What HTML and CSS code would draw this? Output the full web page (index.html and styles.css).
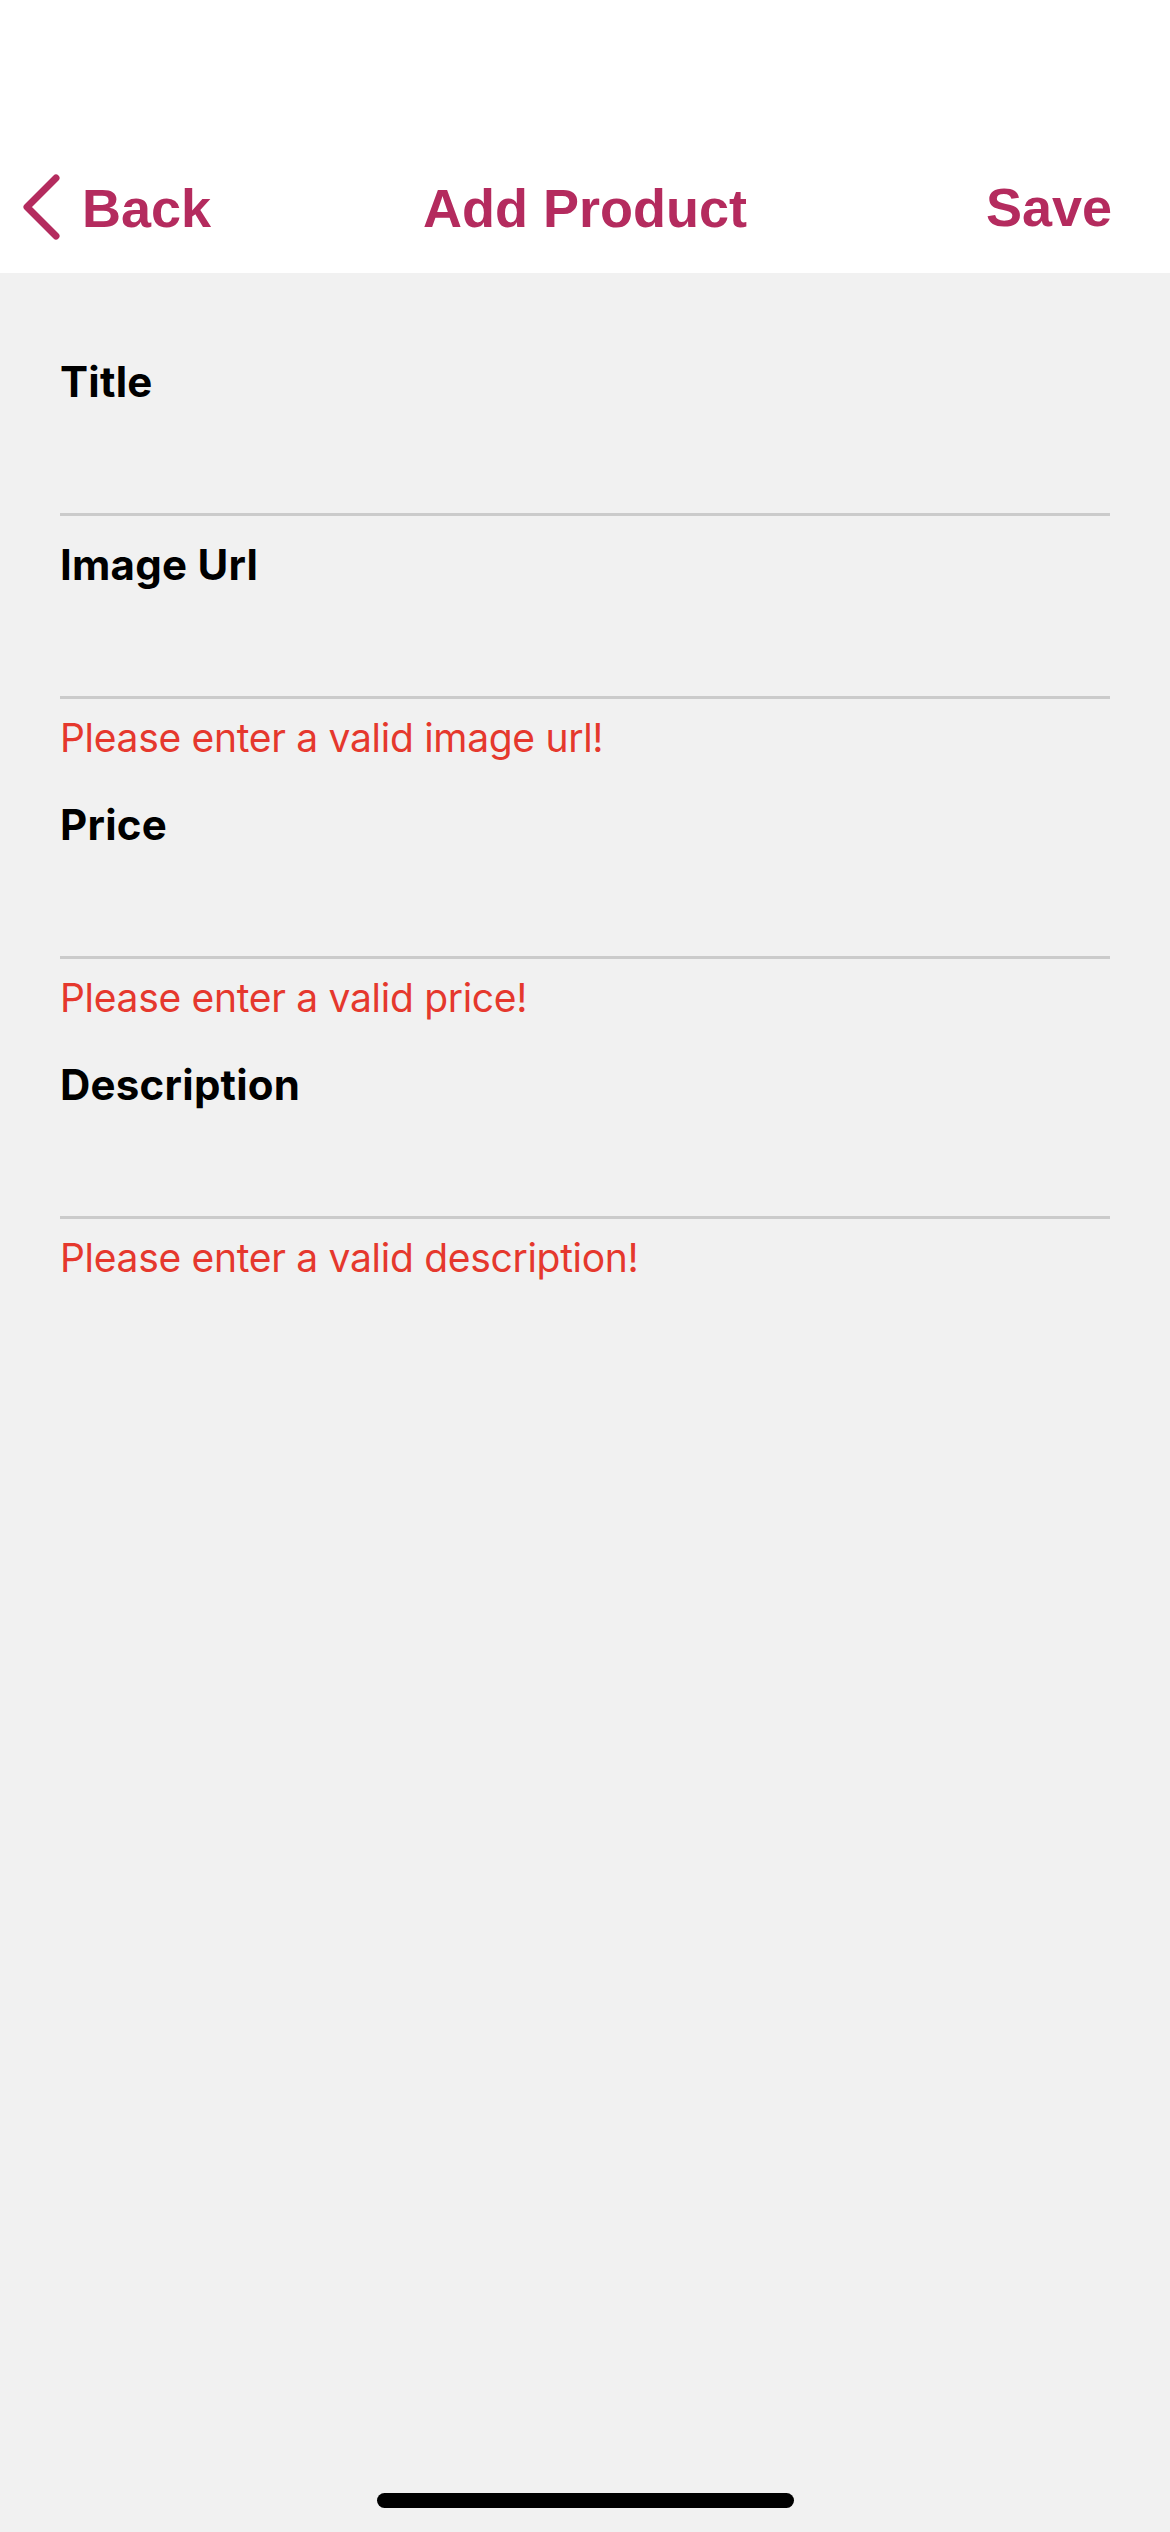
FILE: index.html
```html
<!DOCTYPE html>
<html lang="en">
<head>
<meta charset="utf-8">
<title>Add Product</title>
<link rel="stylesheet" href="styles.css">
</head>
<body>
<div class="screen">
  <header class="header">
    <div class="nav">
      <button class="back" type="button">
        <svg class="chevron" width="40" height="66" viewBox="0 0 40 66" aria-hidden="true">
          <polyline points="34,4 5,33 34,62" fill="none" stroke="#b42b5e" stroke-width="7" stroke-linecap="round" stroke-linejoin="round"/>
        </svg>
        <span class="back-text">Back</span>
      </button>
      <h1 class="title">Add Product</h1>
      <button class="save" type="button">Save</button>
    </div>
  </header>

  <form class="form">
    <div class="field">
      <label class="label">Title</label>
      <div class="input"></div>
    </div>
    <div class="field">
      <label class="label">Image Url</label>
      <div class="input"></div>
      <p class="error">Please enter a valid image url!</p>
    </div>
    <div class="field">
      <label class="label">Price</label>
      <div class="input"></div>
      <p class="error">Please enter a valid price!</p>
    </div>
    <div class="field">
      <label class="label">Description</label>
      <div class="input"></div>
      <p class="error">Please enter a valid description!</p>
    </div>
  </form>

  <div class="home-indicator"></div>
</div>
</body>
</html>
```

FILE: styles.css
```css
* {
  box-sizing: border-box;
}

html, body {
  margin: 0;
  padding: 0;
  background: #f1f1f1;
}

.screen {
  position: relative;
  width: 1170px;
  min-height: 2532px;
  background: #f1f1f1;
  overflow: hidden;
}

.header {
  height: 273px;
  padding-top: 141px;
  background: #ffffff;
}

.nav {
  height: 132px;
  display: grid;
  grid-template-columns: 1fr auto 1fr;
  align-items: center;
  font-family: "Liberation Sans", Arial, sans-serif;
  font-weight: 700;
  font-size: 54px;
  line-height: 54px;
  color: #b42b5e;
}

.back,
.save {
  background: none;
  border: 0;
  margin: 0;
  font: inherit;
  color: inherit;
  cursor: pointer;
}

.back {
  justify-self: start;
  display: flex;
  align-items: center;
  gap: 20px;
  padding: 0 0 0 22px;
}

.chevron {
  display: block;
}

.back-text,
.title,
.save {
  padding-top: 1px;
}

.title {
  margin: 0;
  font: inherit;
  text-align: center;
}

.save {
  justify-self: end;
  padding-right: 58px;
}

.form {
  display: flex;
  flex-direction: column;
  padding: 60px 60px 0;
}

.field {
  display: flex;
  flex-direction: column;
}

.label {
  margin: 24px 0;
  font-family: Inter, "Noto Sans", sans-serif;
  font-weight: 700;
  font-size: 42px;
  line-height: 50px;
  letter-spacing: 0.25px;
  color: #000000;
}

.input {
  height: 85px;
  border-bottom: 3px solid #cbcbcb;
}

.error {
  margin: 15px 0;
  font-family: Inter, "Noto Sans", sans-serif;
  font-weight: 400;
  font-size: 39px;
  line-height: 47px;
  letter-spacing: -0.3px;
  color: #e5382d;
}

.home-indicator {
  position: absolute;
  left: 377px;
  top: 2493px;
  width: 417px;
  height: 15px;
  border-radius: 8px;
  background: #000000;
}
```
